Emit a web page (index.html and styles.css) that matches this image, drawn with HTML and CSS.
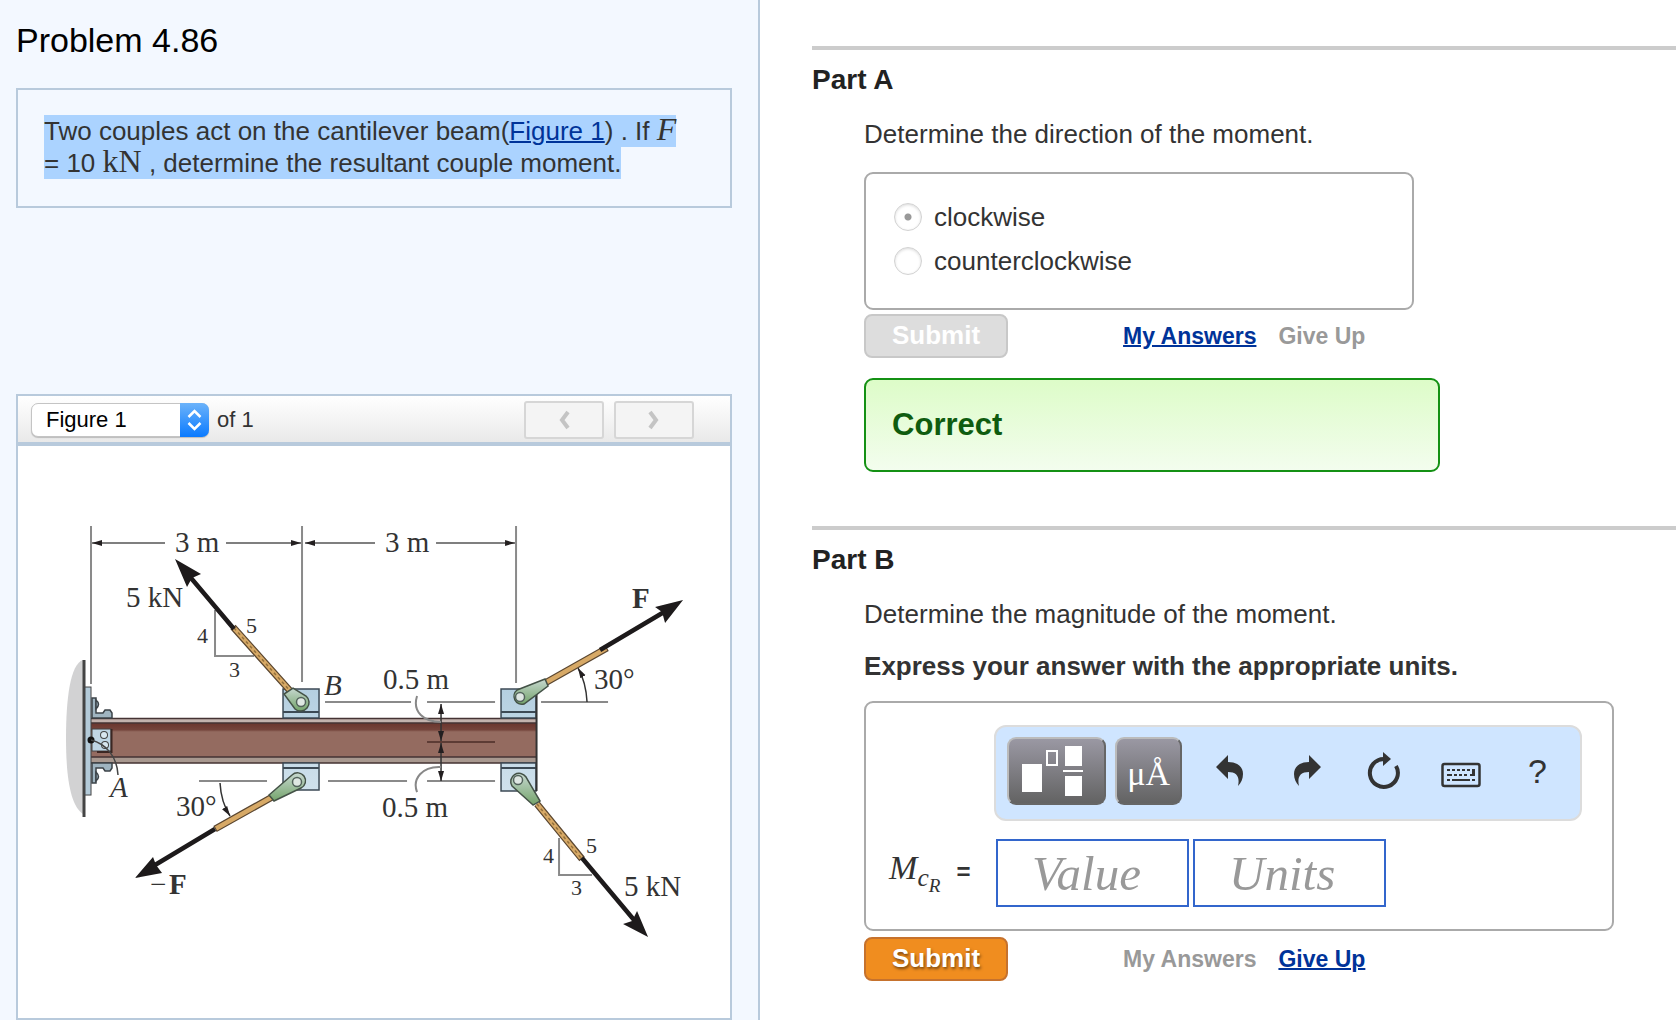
FILE: index.html
```
<!DOCTYPE html>
<html lang="en">
<head>
    <meta charset="UTF-8">
    <meta name="viewport" content="width=device-width, initial-scale=1.0">
    <title>Problem 4.86</title>
    <link rel="stylesheet" href="styles.css">
</head>
<body>
    <aside class="problem">
        <h1>Problem 4.86</h1>
        <div class="statement">
            <p><mark>Two couples act on the cantilever beam(<a href="#figure">Figure 1</a>) . If <i class="math">F</i> = 10 <span class="math">kN</span> , determine the resultant couple moment.</mark></p>
        </div>

        <section class="viewer" id="figure">
            <div class="viewer-bar">
                <div class="picker">
                    <select id="figure-select" aria-label="Figure">
                        <option>Figure 1</option>
                    </select>
                    <svg class="picker-arrows" viewBox="0 0 28 34">
                        <path d="M8 14l6-6 6 6M8 20l6 6 6-6" fill="none" stroke="#fff" stroke-width="2.5"/>
                    </svg>
                </div>
                <label for="figure-select">of 1</label>
                <div class="pager">
                    <button type="button" aria-label="Previous figure" disabled>
                        <svg width="14" height="20" viewBox="0 0 14 20"><path d="M11 2L5 10l6 8" fill="none" stroke="#c4c4c4" stroke-width="4"/></svg>
                    </button>
                    <button type="button" aria-label="Next figure" disabled>
                        <svg width="14" height="20" viewBox="0 0 14 20"><path d="M3 2l6 8-6 8" fill="none" stroke="#c4c4c4" stroke-width="4"/></svg>
                    </button>
                </div>
            </div>

            <svg class="diagram" viewBox="18 446 712 569" role="img" aria-label="Cantilever beam with two couples">
                <defs>
                    <marker id="tip" viewBox="0 0 10 8" refX="10" refY="4" markerWidth="10" markerHeight="8" markerUnits="userSpaceOnUse" orient="auto-start-reverse">
                        <path d="M0 1L10 4L0 7z" fill="#231f20"/>
                    </marker>
                    <linearGradient id="web" x1="0" y1="0" x2="0" y2="1">
                        <stop offset="0" stop-color="#6a352d"/>
                        <stop offset=".2" stop-color="#74443b"/>
                        <stop offset=".26" stop-color="#946b60"/>
                        <stop offset="1" stop-color="#946b60"/>
                    </linearGradient>
                    <linearGradient id="plate" x1="0" y1="0" x2="0" y2="1">
                        <stop offset="0" stop-color="#b4cfe0"/>
                        <stop offset="1" stop-color="#cfe1ec"/>
                    </linearGradient>
                    <linearGradient id="clevis" x1="0" y1="0" x2="0" y2="1">
                        <stop offset="0" stop-color="#c7d8d0"/>
                        <stop offset="1" stop-color="#74a46b"/>
                    </linearGradient>
                </defs>

                <!-- wall -->
                <path d="M83 660C70 664 66 700 66 738C66 780 71 806 83 814z" fill="#d2d2d3"/>
                <path d="M84 660V817" stroke="#444" stroke-width="3"/>

                <!-- dimension lines -->
                <g stroke="#8a8a8a" stroke-width="2" fill="none">
                    <path d="M91 526V684M302 526V682M516 526V683"/>
                    <path d="M325 702H411M427 702H495M541 702H608M199 781H267M328 781H407M427 781H495"/>
                    <path d="M215 610V656H254M559 838V875H592"/>
                </g>
                <g stroke="#555" stroke-width="1.5" fill="none">
                    <path d="M165 543H92" marker-end="url(#tip)"/>
                    <path d="M226 543H301" marker-end="url(#tip)"/>
                    <path d="M375 543H305" marker-end="url(#tip)"/>
                    <path d="M436 543H515" marker-end="url(#tip)"/>
                </g>

                <!-- beam -->
                <rect x="91" y="719" width="445" height="4" fill="#c3b2ad"/>
                <rect x="91" y="723" width="445" height="34" fill="url(#web)"/>
                <rect x="91" y="757" width="445" height="6" fill="#a8988f"/>
                <path d="M91 718.500H537M91 723H537M91 757H537M91 763H537" stroke="#433" stroke-width="1.500"/>

                <!-- support at A -->
                <rect x="85" y="687" width="6" height="108" fill="#b4cbd9" stroke="#444"/>
                <path d="M92 698h4v15h7l2-3h5l2 3v5H92zM92 783h4v-15h7l2 3h5l2-3v-5H92z" fill="#9fb4c0" stroke="#3c4348" stroke-width="1.500"/>
                <path d="M96 700q5 4 0 9zM96 781q5-4 0-9z" fill="#9fb4c0" stroke="#3c4348" stroke-width="1.500"/>
                <rect x="92" y="729" width="19" height="22" fill="#bfd5e4" stroke="#444"/>
                <path d="M111.500 729V752H97" fill="none" stroke="#3b2723" stroke-width="2"/>
                <circle cx="104" cy="735" r="3.500" fill="#d8e6ef" stroke="#444"/>
                <circle cx="105" cy="745" r="3.500" fill="#d8e6ef" stroke="#444"/>
                <circle cx="91" cy="740" r="3.500" fill="#111"/>
                <path d="M91 740C106 744 117 756 118 775" fill="none" stroke="#444" stroke-width="1.500"/>

                <!-- brackets -->
                <g fill="url(#plate)" stroke="#3c4a55" stroke-width="1.500">
                    <path d="M283 689h36v29h-36zM501 689h35v29h-35zM283 763h36v27h-36zM501 763h35v28h-35z"/>
                    <path d="M283 712h36M501 712h35M283 768h36M501 768h35" stroke-width="2"/>
                </g>
                <path d="M536.500 689V791" stroke="#333" stroke-width="2"/>

                <!-- half height dimension -->
                <g stroke="#333" stroke-width="1.500" fill="none">
                    <path d="M427 742H495" stroke="#4b2c27"/>
                    <path d="M441 704V741" marker-start="url(#tip)" marker-end="url(#tip)"/>
                    <path d="M441 743V781" marker-start="url(#tip)" marker-end="url(#tip)"/>
                    <path d="M417 696C412 712 424 722 441 722M441 767C422 766 412 779 417 792" stroke="#888" stroke-width="2"/>
                    <path d="M578 668Q586 682 587 702M220 783Q221 802 230 816" marker-start="url(#tip)" marker-end="url(#tip)"/>
                </g>

                <!-- rods -->
                <g stroke="#5a4630" stroke-width="7">
                    <path d="M233 627L292 693M545 683L607 648M274 796L215 829M537 804L582 859"/>
                </g>
                <g stroke="#d7a966" stroke-width="4.500">
                    <path d="M234 628L292 693M545 683L606 648.500M274 796L216 828.500M537 804L581 858"/>
                </g>
                <g stroke="#93703c" stroke-width="1.500" stroke-dasharray="3 3">
                    <path d="M234 628L292 693M537 804L581 858"/>
                </g>

                <!-- clevises and pins -->
                <g fill="url(#clevis)" stroke="#445247" stroke-width="1.500">
                    <path d="M293 688L306 696A8 8 0 0 1 295 709L284 694z"/>
                    <path d="M545 679L517 690A8 8 0 0 0 524 704L548 686z"/>
                    <path d="M269 795L292 775A8 8 0 1 1 301 788L274 801z"/>
                    <path d="M533 805L512 786A8 8 0 1 1 526 777L540 801z"/>
                </g>
                <g fill="#dfe7e3" stroke="#53635c" stroke-width="1.500">
                    <circle cx="301" cy="702" r="4.500"/>
                    <circle cx="520" cy="697" r="4.500"/>
                    <circle cx="297" cy="782" r="4.500"/>
                    <circle cx="518" cy="780" r="4.500"/>
                </g>

                <!-- force arrows -->
                <g stroke="#1d1a1b" stroke-width="4.500">
                    <path d="M234 629L191 578M600 650L664 612M215 829L155 865M582 858L634 920"/>
                </g>
                <g fill="#1d1a1b">
                    <path d="M175 559L201 574L192 578L187 587z"/>
                    <path d="M683 600L655 607L662 612L665 623z"/>
                    <path d="M135 878L153 857L156 865L162 873z"/>
                    <path d="M648 937L623 924L632 921L637 911z"/>
                </g>

                <g class="labels">
                    <text x="175" y="552">3 m</text>
                    <text x="385" y="552">3 m</text>
                    <text x="126" y="607">5 kN</text>
                    <text x="624" y="896">5 kN</text>
                    <text x="383" y="689">0.5 m</text>
                    <text x="382" y="817">0.5 m</text>
                    <text x="594" y="689">30°</text>
                    <text x="176" y="816">30°</text>
                    <text x="324" y="695" font-style="italic">B</text>
                    <text x="110" y="797" font-style="italic">A</text>
                    <text x="632" y="608" font-weight="bold">F</text>
                    <text x="150" y="894">−</text>
                    <text x="169" y="894" font-weight="bold">F</text>
                </g>
                <g class="labels small">
                    <text x="197" y="643">4</text>
                    <text x="246" y="633">5</text>
                    <text x="229" y="677">3</text>
                    <text x="543" y="863">4</text>
                    <text x="586" y="853">5</text>
                    <text x="571" y="895">3</text>
                </g>
            </svg>
        </section>
    </aside>

    <main class="parts">
        <section class="part">
            <h2>Part A</h2>
            <div class="part-body">
                <p>Determine the direction of the moment.</p>
                <div class="choices">
                    <label><input type="radio" name="direction" checked disabled>clockwise</label>
                    <label><input type="radio" name="direction" disabled>counterclockwise</label>
                </div>
                <div class="actions">
                    <button type="button" class="submit" disabled>Submit</button>
                    <a href="#answers">My Answers</a>
                    <span>Give Up</span>
                </div>
                <div class="feedback">Correct</div>
            </div>
        </section>

        <section class="part">
            <h2>Part B</h2>
            <div class="part-body">
                <p>Determine the magnitude of the moment.</p>
                <p class="hint">Express your answer with the appropriate units.</p>
                <div class="answer">
                    <div class="toolbar">
                        <button type="button" class="tool tool-templates" aria-label="Templates">
                            <svg width="62" height="62" viewBox="0 0 62 62" fill="#fff">
                                <rect x="0" y="24" width="20" height="28"/>
                                <rect x="25" y="11" width="10" height="14" fill="none" stroke="#fff" stroke-width="2"/>
                                <rect x="43" y="6" width="17" height="20"/>
                                <rect x="41" y="30" width="20" height="2"/>
                                <rect x="43" y="36" width="17" height="20"/>
                            </svg>
                        </button>
                        <button type="button" class="tool tool-units" aria-label="Unit symbols">μÅ</button>
                        <button type="button" class="icon" aria-label="Undo">
                            <svg width="28" height="34" viewBox="0 0 28 34"><path d="M0 13L12 1V8C22 8 27 13 27 20C27 25 25 29 22 32C24 23 21 18 12 18V25z"/></svg>
                        </button>
                        <button type="button" class="icon" aria-label="Redo">
                            <svg width="28" height="34" viewBox="0 0 28 34"><path d="M28 13L16 1V8C6 8 1 13 1 20C1 25 3 29 6 32C4 23 7 18 16 18V25z"/></svg>
                        </button>
                        <button type="button" class="icon" aria-label="Reset">
                            <svg width="34" height="38" viewBox="0 0 34 38"><path d="M17 7A14 14 0 1 0 29 14" fill="none" stroke="#333" stroke-width="4"/><path d="M16 0L24 7L16 14z"/></svg>
                        </button>
                        <button type="button" class="icon icon-keyboard" aria-label="Keyboard shortcuts">
                            <svg width="40" height="26" viewBox="0 0 40 26">
                                <rect x="1.500" y="2" width="37" height="22" rx="2" fill="none" stroke="#333" stroke-width="2.500"/>
                                <path d="M6 7h3v2H6zM11 7h3v2h-3zM16 7h3v2h-3zM21 7h3v2h-3zM26 7h3v2h-3zM31 7h3v7h-5v-2h2zM6 12h5v2H6zM13 12h3v2h-3zM18 12h3v2h-3zM23 12h3v2h-3zM6 17h3v2H6zM11 17h18v2H11zM31 17h3v2h-3z"/>
                            </svg>
                        </button>
                        <button type="button" class="icon" aria-label="Help">?</button>
                    </div>
                    <label for="value"><i class="math">M<sub>c<sub>R</sub></sub></i> <b>=</b></label>
                    <div class="fields">
                        <input type="text" id="value" placeholder="Value">
                        <input type="text" aria-label="Units" placeholder="Units">
                    </div>
                </div>
                <div class="actions">
                    <button type="button" class="submit">Submit</button>
                    <span>My Answers</span>
                    <a href="#giveup">Give Up</a>
                </div>
            </div>
        </section>
    </main>
</body>
</html>
```
FILE: styles.css
```
* {
    box-sizing: border-box;
}
body {
    display: flex;
    min-height: 100vh;
    margin: 0;
    background: #fff;
    color: #333;
    font-family: "Liberation Sans", Arial, sans-serif;
    font-size: 26px;
    line-height: 32px;
}
h1, h2, p {
    margin: 0;
}
a {
    color: #003399;
    text-decoration-thickness: 2px;
}
.math {
    font-family: "Liberation Serif", "Times New Roman", serif;
    font-size: 32px;
    line-height: 20px;
}

/* left side */
.problem {
    display: flex;
    flex-direction: column;
    flex: none;
    width: 45.35%;
    padding: 20px 26px 0 16px;
    background: #f3f8ff;
    border-right: 2px solid #b8cadc;
}
h1 {
    margin-bottom: 28px;
    color: #000;
    font-size: 34px;
    font-weight: normal;
    line-height: 40px;
}
.statement {
    padding: 25px 34px 27px 26px;
    border: 2px solid #b8cadc;
}
mark {
    padding: 1px 0;
    background: #abd3ff;
    color: #333;
}
.viewer {
    flex: 1;
    margin-top: 186px;
    background: #fff;
    border: 2px solid #b8cadc;
}
.viewer-bar {
    display: flex;
    align-items: center;
    height: 50px;
    padding: 1px 36px 0 13px;
    border-bottom: 4px solid #b8cadc;
    background: linear-gradient(#fff, #e9e9e9);
    font-size: 22px;
}
.picker {
    position: relative;
    margin-right: 8px;
}
.picker select {
    appearance: none;
    display: block;
    width: 178px;
    height: 34px;
    padding: 0 0 0 14px;
    border: 1px solid #c4c4c4;
    border-radius: 7px;
    background: #fff;
    box-shadow: 0 1px 1px rgba(0, 0, 0, 0.2);
    color: #000;
    font: 22px "Liberation Sans", Arial, sans-serif;
}
.picker-arrows {
    position: absolute;
    top: 0;
    right: 0;
    width: 29px;
    height: 34px;
    border-radius: 0 7px 7px 0;
    background: linear-gradient(#6cb3fa, #0a7aff);
    pointer-events: none;
}
.pager {
    display: flex;
    gap: 10px;
    margin-left: auto;
}
.pager button {
    display: flex;
    align-items: center;
    justify-content: center;
    width: 80px;
    height: 38px;
    padding: 0;
    border: 2px solid #d6d6d6;
    border-radius: 3px;
    background: #f4f4f4;
}
.diagram {
    display: block;
    width: 100%;
}
.labels {
    fill: #333;
    font-family: "Liberation Serif", "Times New Roman", serif;
    font-size: 29px;
}
.small {
    font-size: 22px;
}

/* right side */
.parts {
    flex: 1;
    min-width: 0;
    padding: 46px 0 0 52px;
}
.part {
    margin-bottom: 54px;
    padding-top: 14px;
    border-top: 4px solid #ccc;
}
.part:last-child {
    margin-bottom: 0;
}
h2 {
    color: #222;
    font-size: 28px;
    line-height: 32px;
}
.part-body {
    padding: 22px 62px 0 52px;
}
.choices {
    max-width: 550px;
    margin-top: 22px;
    padding: 21px 28px 25px;
    border: 2px solid #aaa;
    border-radius: 9px;
}
.choices label {
    display: flex;
    align-items: center;
    gap: 12px;
    height: 44px;
}
.choices input {
    appearance: none;
    width: 28px;
    height: 28px;
    margin: 0;
    border: 1px solid #d2d2d2;
    border-radius: 50%;
    background: #fff;
    box-shadow: inset 0 1px 3px rgba(0, 0, 0, 0.15);
}
.choices input:checked {
    background: radial-gradient(circle, #999 0 3px, #fff 4px);
}
.actions {
    display: flex;
    align-items: center;
    gap: 22px;
    margin-top: 4px;
    color: #999;
    font-size: 23px;
    font-weight: bold;
}
.submit {
    width: 144px;
    height: 44px;
    margin-right: 93px;
    padding: 0 0 2px;
    border: 2px solid #c6722d;
    border-radius: 8px;
    background: #f08d1f;
    color: #fff;
    font: bold 26px "Liberation Sans", Arial, sans-serif;
    text-shadow: 1px 2px 3px rgba(0, 0, 0, 0.5);
}
.submit:disabled {
    border-color: #c8c8c8;
    background: #ddd;
    text-shadow: none;
}
.feedback {
    max-width: 576px;
    margin-top: 20px;
    padding: 29px 26px;
    border: 2px solid #149114;
    border-radius: 9px;
    background: linear-gradient(#ddfcc8, #f3fdee);
    color: #0f5c0f;
    font-size: 31px;
    font-weight: bold;
}
.hint {
    margin-top: 20px;
    font-weight: bold;
}
.answer {
    display: grid;
    grid-template-columns: 105px 1fr;
    row-gap: 18px;
    align-items: center;
    max-width: 750px;
    margin-top: 19px;
    padding: 22px 30px 22px 23px;
    border: 2px solid #aaa;
    border-radius: 9px;
}
.answer + .actions {
    margin-top: 6px;
}
.toolbar {
    display: flex;
    grid-column: 2;
    height: 96px;
    padding: 10px 0 10px 11px;
    border: 2px solid #dcdcdc;
    border-radius: 12px;
    background: #cfe5ff;
}
.tool {
    display: flex;
    align-items: center;
    justify-content: center;
    height: 68px;
    margin-right: 9px;
    padding: 0;
    border: 2px solid;
    border-color: #bbb #666 #666 #bbb;
    border-radius: 9px;
    background: linear-gradient(#9a98a3, #636363);
    color: #fff;
}
.tool-templates {
    width: 99px;
    padding-right: 8px;
}
.tool-units {
    width: 67px;
    padding-top: 6px;
    font: 34px "Liberation Serif", "Times New Roman", serif;
}
.icon {
    display: flex;
    align-items: center;
    justify-content: center;
    width: 77px;
    height: 68px;
    padding: 0;
    border: 0;
    background: none;
    color: #333;
    fill: #333;
    font: 34px "Liberation Sans", Arial, sans-serif;
}
.icon-keyboard {
    padding-top: 8px;
}
.answer label {
    display: flex;
    align-items: center;
    gap: 16px;
    padding-bottom: 2px;
}
.answer label .math {
    font-size: 34px;
}
.answer b {
    font-size: 24px;
}
sub {
    font-size: 75%;
    line-height: 0;
}
.fields {
    display: flex;
    gap: 4px;
    padding-left: 2px;
}
.fields input {
    width: 193px;
    height: 68px;
    padding: 0 0 0 34px;
    border: 2px solid #36c;
    background: #fff;
    color: #333;
    font: italic 49px "Liberation Serif", "Times New Roman", serif;
}
.fields input::placeholder {
    color: #999;
}
```
